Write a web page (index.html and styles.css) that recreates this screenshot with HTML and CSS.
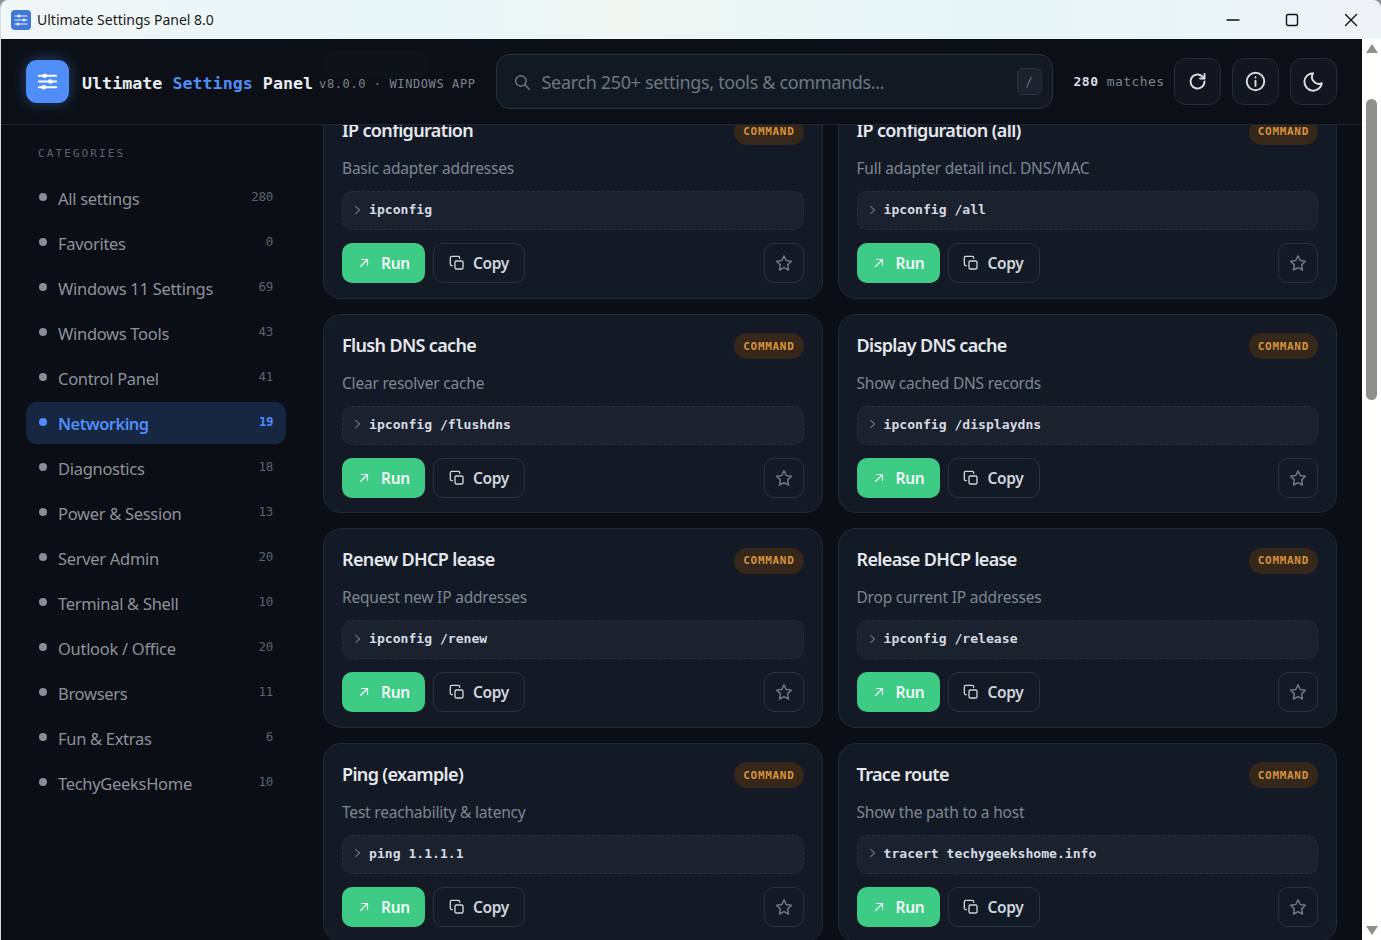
FILE: index.html
```html
<!DOCTYPE html>
<html lang="en">
<head>
    <meta charset="UTF-8">
    <meta name="viewport" content="width=device-width, initial-scale=1.0">
    <title>Ultimate Settings Panel 8.0</title>
    <link rel="stylesheet" href="styles.css">
</head>
<body>
    <svg class="icon-defs" width="0" height="0">
        <symbol id="i-run" viewBox="0 0 24 24"><path d="M6 18 18 6M8 6h10v10"/></symbol>
        <symbol id="i-copy" viewBox="0 0 24 24"><rect x="9" y="9" width="12" height="12" rx="2"/><path d="M5 16H4a2 2 0 0 1-2-2V4a2 2 0 0 1 2-2h10a2 2 0 0 1 2 2v1"/></symbol>
        <symbol id="i-star" viewBox="0 0 24 24"><path d="m12 2.5 3 6.2 6.8 1-4.9 4.8 1.1 6.8-6-3.2-6 3.2 1.100-6.800-4.900-4.800 6.800-1z"/></symbol>
        <symbol id="i-chevron" viewBox="0 0 10 12"><path d="m2 1.500 5 4.500-5 4.500"/></symbol>
    </svg>

    <div class="window">
        <div class="titlebar">
            <div class="app-icon">
                <svg viewBox="0 0 20 20"><path d="M4 6h12M4 10h12M4 14h12"/><circle cx="8" cy="6" r="1.500"/><circle cx="13" cy="10" r="1.500"/><circle cx="7" cy="14" r="1.500"/></svg>
            </div>
            <span class="window-title">Ultimate Settings Panel 8.0</span>
            <div class="window-controls">
                <svg viewBox="0 0 14 14"><path d="M1 7h12"/></svg>
                <svg viewBox="0 0 14 14"><rect x="1.500" y="1.500" width="11" height="11" rx="1.500"/></svg>
                <svg viewBox="0 0 14 14"><path d="m1.500 1.500 11 11M12.500 1.500l-11 11"/></svg>
            </div>
        </div>

        <div class="client">
            <div class="app">
                <header class="header">
                    <div class="logo">
                        <svg viewBox="0 0 24 24"><path d="M3 6h18M3 12h18M3 18h18"/><circle cx="9" cy="6" r="2.400"/><circle cx="15" cy="12" r="2.400"/><circle cx="8" cy="18" r="2.400"/></svg>
                    </div>
                    <div class="brand">Ultimate <span class="accent">Settings</span> Panel</div>
                    <div class="version">v8.0.0 · WINDOWS APP</div>
                    <div class="search">
                        <svg class="search-icon" viewBox="0 0 24 24"><circle cx="10.500" cy="10.500" r="7"/><path d="m16 16 5.500 5.500"/></svg>
                        <span class="search-text">Search 250+ settings, tools &amp; commands...</span>
                        <span class="kbd">/</span>
                    </div>
                    <div class="matches"><b>280</b> matches</div>
                    <button class="head-btn">
                        <svg viewBox="0 0 24 24"><path d="M20 12a8 8 0 1 1-2.600-5.900L20 8.500"/><path d="M20 3.500v5h-5"/></svg>
                    </button>
                    <button class="head-btn">
                        <svg viewBox="0 0 24 24"><circle cx="12" cy="12" r="10"/><path d="M12 11v6M12 7v.4"/></svg>
                    </button>
                    <button class="head-btn">
                        <svg viewBox="0 0 24 24"><path d="M11.500 2.500a8 8 0 0 0 10 11.500A10 10 0 1 1 11.500 2.500z"/></svg>
                    </button>
                </header>

                <div class="body">
                    <nav class="sidebar">
                        <div class="side-label">CATEGORIES</div>
                        <a class="cat"><i></i><span>All settings</span><em>280</em></a>
                        <a class="cat"><i></i><span>Favorites</span><em>0</em></a>
                        <a class="cat"><i></i><span>Windows 11 Settings</span><em>69</em></a>
                        <a class="cat"><i></i><span>Windows Tools</span><em>43</em></a>
                        <a class="cat"><i></i><span>Control Panel</span><em>41</em></a>
                        <a class="cat active"><i></i><span>Networking</span><em>19</em></a>
                        <a class="cat"><i></i><span>Diagnostics</span><em>18</em></a>
                        <a class="cat"><i></i><span>Power &amp; Session</span><em>13</em></a>
                        <a class="cat"><i></i><span>Server Admin</span><em>20</em></a>
                        <a class="cat"><i></i><span>Terminal &amp; Shell</span><em>10</em></a>
                        <a class="cat"><i></i><span>Outlook / Office</span><em>20</em></a>
                        <a class="cat"><i></i><span>Browsers</span><em>11</em></a>
                        <a class="cat"><i></i><span>Fun &amp; Extras</span><em>6</em></a>
                        <a class="cat"><i></i><span>TechyGeeksHome</span><em>10</em></a>
                    </nav>

                    <main class="main">
                        <div class="grid">
                            <div class="card">
                                <div class="card-top"><h3>IP configuration</h3><span class="badge">COMMAND</span></div>
                                <p class="desc">Basic adapter addresses</p>
                                <div class="cmd"><svg class="prompt"><use href="#i-chevron"/></svg>ipconfig</div>
                                <div class="actions">
                                    <button class="run"><svg><use href="#i-run"/></svg>Run</button>
                                    <button class="copy"><svg><use href="#i-copy"/></svg>Copy</button>
                                    <button class="fav"><svg><use href="#i-star"/></svg></button>
                                </div>
                            </div>
                            <div class="card">
                                <div class="card-top"><h3>IP configuration (all)</h3><span class="badge">COMMAND</span></div>
                                <p class="desc">Full adapter detail incl. DNS/MAC</p>
                                <div class="cmd"><svg class="prompt"><use href="#i-chevron"/></svg>ipconfig /all</div>
                                <div class="actions">
                                    <button class="run"><svg><use href="#i-run"/></svg>Run</button>
                                    <button class="copy"><svg><use href="#i-copy"/></svg>Copy</button>
                                    <button class="fav"><svg><use href="#i-star"/></svg></button>
                                </div>
                            </div>
                            <div class="card">
                                <div class="card-top"><h3>Flush DNS cache</h3><span class="badge">COMMAND</span></div>
                                <p class="desc">Clear resolver cache</p>
                                <div class="cmd"><svg class="prompt"><use href="#i-chevron"/></svg>ipconfig /flushdns</div>
                                <div class="actions">
                                    <button class="run"><svg><use href="#i-run"/></svg>Run</button>
                                    <button class="copy"><svg><use href="#i-copy"/></svg>Copy</button>
                                    <button class="fav"><svg><use href="#i-star"/></svg></button>
                                </div>
                            </div>
                            <div class="card">
                                <div class="card-top"><h3>Display DNS cache</h3><span class="badge">COMMAND</span></div>
                                <p class="desc">Show cached DNS records</p>
                                <div class="cmd"><svg class="prompt"><use href="#i-chevron"/></svg>ipconfig /displaydns</div>
                                <div class="actions">
                                    <button class="run"><svg><use href="#i-run"/></svg>Run</button>
                                    <button class="copy"><svg><use href="#i-copy"/></svg>Copy</button>
                                    <button class="fav"><svg><use href="#i-star"/></svg></button>
                                </div>
                            </div>
                            <div class="card">
                                <div class="card-top"><h3>Renew DHCP lease</h3><span class="badge">COMMAND</span></div>
                                <p class="desc">Request new IP addresses</p>
                                <div class="cmd"><svg class="prompt"><use href="#i-chevron"/></svg>ipconfig /renew</div>
                                <div class="actions">
                                    <button class="run"><svg><use href="#i-run"/></svg>Run</button>
                                    <button class="copy"><svg><use href="#i-copy"/></svg>Copy</button>
                                    <button class="fav"><svg><use href="#i-star"/></svg></button>
                                </div>
                            </div>
                            <div class="card">
                                <div class="card-top"><h3>Release DHCP lease</h3><span class="badge">COMMAND</span></div>
                                <p class="desc">Drop current IP addresses</p>
                                <div class="cmd"><svg class="prompt"><use href="#i-chevron"/></svg>ipconfig /release</div>
                                <div class="actions">
                                    <button class="run"><svg><use href="#i-run"/></svg>Run</button>
                                    <button class="copy"><svg><use href="#i-copy"/></svg>Copy</button>
                                    <button class="fav"><svg><use href="#i-star"/></svg></button>
                                </div>
                            </div>
                            <div class="card">
                                <div class="card-top"><h3>Ping (example)</h3><span class="badge">COMMAND</span></div>
                                <p class="desc">Test reachability &amp; latency</p>
                                <div class="cmd"><svg class="prompt"><use href="#i-chevron"/></svg>ping 1.1.1.1</div>
                                <div class="actions">
                                    <button class="run"><svg><use href="#i-run"/></svg>Run</button>
                                    <button class="copy"><svg><use href="#i-copy"/></svg>Copy</button>
                                    <button class="fav"><svg><use href="#i-star"/></svg></button>
                                </div>
                            </div>
                            <div class="card">
                                <div class="card-top"><h3>Trace route</h3><span class="badge">COMMAND</span></div>
                                <p class="desc">Show the path to a host</p>
                                <div class="cmd"><svg class="prompt"><use href="#i-chevron"/></svg>tracert techygeekshome.info</div>
                                <div class="actions">
                                    <button class="run"><svg><use href="#i-run"/></svg>Run</button>
                                    <button class="copy"><svg><use href="#i-copy"/></svg>Copy</button>
                                    <button class="fav"><svg><use href="#i-star"/></svg></button>
                                </div>
                            </div>
                        </div>
                    </main>
                </div>
            </div>

            <div class="scrollbar">
                <span class="arrow up"></span>
                <div class="track"><div class="thumb"></div></div>
                <span class="arrow down"></span>
            </div>
        </div>
    </div>
</body>
</html>
```

FILE: styles.css
```css
* {
    box-sizing: border-box;
}
html, body {
    height: 100%;
}
body {
    margin: 0;
    overflow: hidden;
    background-color: #8d9094;
    font-family: "Noto Sans", Arial, sans-serif;
}
.icon-defs {
    position: absolute;
}
svg {
    fill: none;
    stroke: currentColor;
    stroke-linecap: round;
    stroke-linejoin: round;
}

/* window frame */
.window {
    height: 940px;
    display: flex;
    flex-direction: column;
    border-left: 1px solid #d8dbdc;
    border-radius: 8px 8px 0 0;
    overflow: hidden;
}
.titlebar {
    height: 39px;
    flex: none;
    display: flex;
    align-items: center;
    padding-left: 10px;
    background: linear-gradient(90deg, #f1f6f6 0%, #e8f6f8 30%, #f0f7f3 45%, #e6f5f7 70%, #eef3f7 100%);
}
.app-icon {
    width: 20px;
    height: 20px;
    border-radius: 4px;
    background-color: #3f78d6;
    color: #e8eefb;
    margin-right: 6px;
}
.app-icon svg {
    display: block;
    width: 20px;
    height: 20px;
    stroke-width: 1.2;
}
.app-icon circle {
    fill: #e8eefb;
    stroke: none;
}
.window-title {
    font-size: 14px;
    color: #1a1a1a;
}
.window-controls {
    margin-left: auto;
    display: flex;
    gap: 45px;
    padding-right: 23px;
    color: #111;
}
.window-controls svg {
    width: 14px;
    height: 14px;
    stroke-width: 1.4;
}

.client {
    flex: 1;
    min-height: 0;
    display: flex;
}
.app {
    flex: 1;
    min-width: 0;
    display: flex;
    flex-direction: column;
    background-color: #0b0e14;
}

/* header */
.header {
    height: 86px;
    flex: none;
    position: relative;
    z-index: 2;
    display: flex;
    align-items: center;
    padding: 0 25px;
    background-color: #0c1016;
    border-bottom: 1px solid #1e2631;
}
.header::before {
    content: "";
    position: absolute;
    left: 322px;
    top: 11px;
    width: 106px;
    height: 29px;
    border-radius: 14px;
    background-color: #0e1219;
}
.logo {
    width: 43px;
    height: 43px;
    flex: none;
    margin: 0 13px 0 0;
    padding: 10px;
    border-radius: 11px;
    background-color: #4f8df8;
    color: #fff;
    box-shadow: 0 0 14px rgba(79, 141, 248, 0.4);
}
.logo svg {
    display: block;
    width: 23px;
    height: 23px;
    stroke-width: 2.2;
}
.logo circle {
    fill: #fff;
    stroke: none;
}
.brand {
    margin-top: 2px;
    font-family: "DejaVu Sans Mono", monospace;
    font-weight: 700;
    font-size: 16.7px;
    color: #e9edf3;
    white-space: nowrap;
}
.accent {
    color: #4f8df8;
}
.version {
    position: relative;
    margin: 4px 0 0 6px;
    font-family: "DejaVu Sans Mono", monospace;
    font-size: 12px;
    letter-spacing: 0.6px;
    color: #7b8490;
    white-space: nowrap;
}
.search {
    width: 557px;
    height: 55px;
    flex: none;
    margin-left: 20px;
    display: flex;
    align-items: center;
    padding: 0 10px 0 16px;
    background-color: #131923;
    border: 1px solid #2a3240;
    border-radius: 14px;
    color: #6d7683;
}
.search-icon {
    width: 18px;
    height: 18px;
    stroke-width: 2;
    margin-right: 11px;
}
.search-text {
    font-size: 18px;
    letter-spacing: -0.35px;
    white-space: nowrap;
}
.kbd {
    margin-left: auto;
    width: 25px;
    height: 27px;
    display: flex;
    align-items: center;
    justify-content: center;
    font-family: "DejaVu Sans Mono", monospace;
    font-size: 12px;
    background-color: #1b222d;
    border: 1px solid #2a3240;
    border-radius: 6px;
}
.matches {
    margin: 0 9px 0 21px;
    font-family: "DejaVu Sans Mono", monospace;
    font-size: 13px;
    letter-spacing: 0.45px;
    color: #7b8490;
    white-space: nowrap;
}
.matches b {
    color: #d9dee6;
}
.head-btn {
    width: 47px;
    height: 47px;
    flex: none;
    margin-right: 11px;
    padding: 0;
    display: flex;
    align-items: center;
    justify-content: center;
    background-color: #11161f;
    border: 1px solid #252d39;
    border-radius: 12px;
    color: #d9dee6;
}
.head-btn:last-child {
    margin-right: 0;
}
.head-btn svg {
    width: 21px;
    height: 21px;
    stroke-width: 2.2;
}

.body {
    flex: 1;
    min-height: 0;
    display: flex;
}

/* sidebar */
.sidebar {
    width: 310px;
    flex: none;
    padding: 21px 25px 0 25px;
}
.side-label {
    height: 16px;
    margin: 0 0 15px 12px;
    font-family: "DejaVu Sans Mono", monospace;
    font-size: 11px;
    line-height: 16px;
    letter-spacing: 2.1px;
    color: #5b6470;
}
.cat {
    height: 42px;
    margin-bottom: 3px;
    display: flex;
    align-items: center;
    padding: 0 13px;
    border-radius: 11px;
    color: #8b929d;
    font-size: 16.5px;
    letter-spacing: -0.3px;
}
.cat i {
    width: 8px;
    height: 8px;
    flex: none;
    margin: -3px 11px 0 0;
    border-radius: 50%;
    background-color: #868e99;
}
.cat em {
    margin-left: auto;
    font-style: normal;
    font-family: "DejaVu Sans Mono", monospace;
    font-size: 12.500px;
    color: #5b6470;
    margin-top: -4px;
}
.cat.active {
    background-color: #182741;
    color: #4f8df8;
    font-weight: 600;
    letter-spacing: -0.5px;
}
.cat.active i {
    background-color: #4f8df8;
}
.cat.active em {
    color: #4f8df8;
    font-weight: 700;
}

/* cards */
.main {
    flex: 1;
    min-width: 0;
    overflow: hidden;
    padding-right: 25px;
    padding-left: 12px;
}
.grid {
    margin-top: -25.600px;
    display: grid;
    grid-template-columns: 1fr 1fr;
    gap: 15px;
}
.card {
    height: 199.400px;
    padding: 18px;
    background-color: #141a25;
    border: 1px solid #222a37;
    border-radius: 18px;
}
.card-top {
    height: 26px;
    display: flex;
    align-items: center;
    justify-content: space-between;
}
h3 {
    margin: -2px 0 0;
    font-size: 18px;
    font-weight: 600;
    letter-spacing: -0.65px;
    color: #e4e8ee;
}
.badge {
    height: 26px;
    margin-top: 1px;
    padding: 0 9px;
    display: flex;
    align-items: center;
    font-family: "DejaVu Sans Mono", monospace;
    font-size: 11px;
    font-weight: 700;
    letter-spacing: 0.7px;
    color: #d8923b;
    background-color: #35271a;
    border-radius: 13px;
}
.desc {
    margin: 14px 0 12px;
    font-size: 15.500px;
    line-height: 21px;
    letter-spacing: -0.2px;
    color: #7e8692;
}
.cmd {
    height: 39px;
    display: flex;
    align-items: center;
    padding: 0 11px 2px;
    font-family: "DejaVu Sans Mono", monospace;
    font-size: 13.100px;
    font-weight: 600;
    color: #d5dae2;
    background-color: #1b212d;
    border: 1px dashed #282f3c;
    border-radius: 10px;
}
.prompt {
    width: 8px;
    height: 10px;
    margin-right: 7px;
    stroke-width: 1.4;
    color: #6a7280;
}
.actions {
    margin-top: 13px;
    display: flex;
    gap: 8px;
}
.actions button {
    height: 40px;
    padding: 0;
    display: flex;
    align-items: center;
    justify-content: center;
    font-family: "Noto Sans", Arial, sans-serif;
    font-size: 15.500px;
    font-weight: 600;
    letter-spacing: -0.3px;
    border-radius: 10px;
}
.run {
    width: 83px;
    gap: 10px;
    color: #f2fbf6;
    background-color: #3ecb86;
    border: none;
}
.run svg {
    width: 14px;
    height: 14px;
    stroke-width: 2;
}
.copy {
    width: 92px;
    gap: 8px;
    color: #cfd5dd;
    background-color: #141a25;
    border: 1px solid #2a3240;
}
.copy svg {
    width: 16px;
    height: 16px;
    stroke-width: 2;
}
.fav {
    width: 40px;
    margin-left: auto;
    color: #6f7784;
    background-color: #141a25;
    border: 1px solid #2a3240;
}
.fav svg {
    width: 18px;
    height: 18px;
    stroke-width: 2;
}

/* native scrollbar strip */
.scrollbar {
    width: 19px;
    flex: none;
    display: flex;
    flex-direction: column;
    align-items: center;
    background-color: #fff;
}
.arrow {
    width: 0;
    height: 0;
    flex: none;
    border-left: 6px solid transparent;
    border-right: 6px solid transparent;
}
.arrow.up {
    margin-top: 5px;
    border-bottom: 9px solid #8f8f8f;
}
.arrow.down {
    margin-bottom: 5px;
    border-top: 9px solid #8f8f8f;
}
.track {
    flex: 1;
    width: 100%;
    padding: 46px 4px 0;
}
.thumb {
    height: 301px;
    border-radius: 6px;
    background-color: #8f8f8f;
}
```
